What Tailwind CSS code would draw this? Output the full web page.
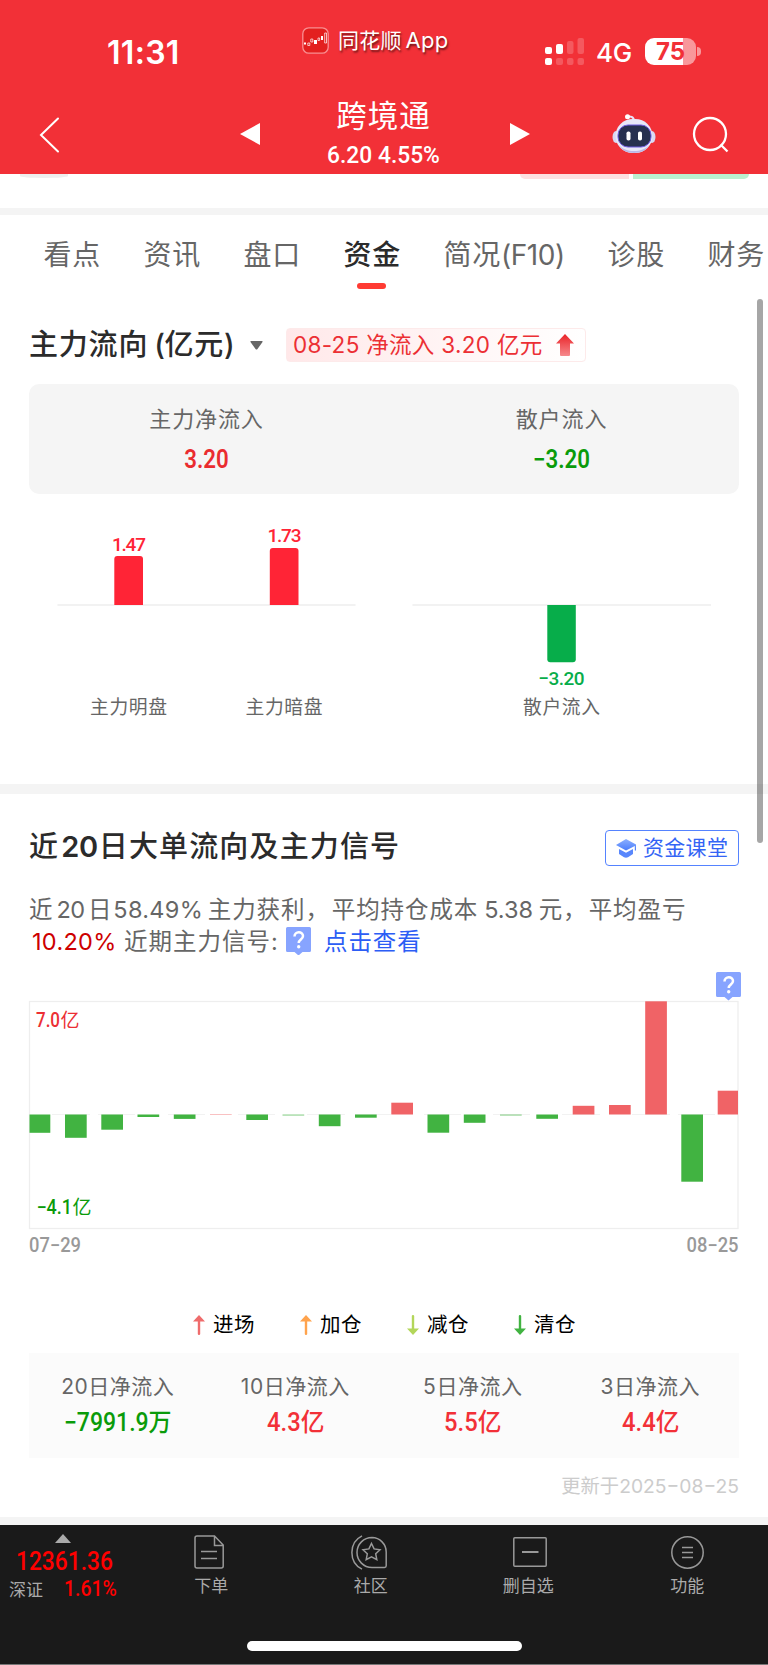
<!DOCTYPE html>
<html lang="zh-CN">
  <head>
    <meta charset="UTF-8" />
    <meta name="viewport" content="width=device-width, initial-scale=1.0" />
    <title>跨境通 - 资金</title>
    <script src="https://cdn.jsdelivr.net/npm/@tailwindcss/browser@4"></script>
  </head>

  <body
    class="relative w-[768px] h-[1665px] overflow-hidden bg-white text-[#666] whitespace-nowrap font-['Inter','Noto_Sans_CJK_SC',sans-serif]"
  >
    <!-- Header -->
    <header class="h-[174px] bg-[#f23037] text-white">
      <!-- Status bar -->
      <div class="flex h-[85px] pt-[26px] pl-[107px]">
        <div class="w-[195px] pt-[7px] text-[32px] leading-[40px] font-semibold tracking-[0.3px]">11:31</div>
        <div class="flex w-[243px] items-start">
          <svg class="mt-[1px] w-[27px] h-[27px]" viewBox="0 0 27 27" fill="none">
            <rect x=".8" y=".8" width="25.4" height="25.4" rx="6" fill="#e3201f" stroke="#f98f92" stroke-width="1.3" />
            <path d="M2 15.500h2v2H2zM12 13h3v4h-3zM19 9h2v4h-2z" fill="#fff" />
            <path d="M5.800 16h2v2.500h-2zM8.800 12h2v3h-2zM16 11h1.600v2.500h-1.600zM22.700 6h1.800v10h-1.800z" stroke="#fff" stroke-width=".7" />
          </svg>
          <div class="ml-[9px] text-[21px] leading-[28px] tracking-[0.2px] [text-shadow:1px_2px_2px_rgba(0,0,0,0.55)]">同花顺<span class="ml-1 text-[22px]">App</span></div>
        </div>
        <svg class="mt-[12px] w-[40px] h-[27px]" viewBox="0 0 40 27" fill="#fff">
          <rect x="0" y="9" width="7" height="7" rx="2" />
          <rect x="11" y="6" width="7" height="10" rx="2" />
          <rect x="22" y="3" width="6.500" height="13" rx="2" opacity=".2" />
          <rect x="32.500" y="0" width="6.500" height="16" rx="2" opacity=".2" />
          <rect x="0" y="20" width="7" height="7" rx="2" />
          <rect x="11" y="20" width="7" height="7" rx="2" opacity=".2" />
          <rect x="22" y="20" width="6.500" height="7" rx="2" opacity=".2" />
          <rect x="32.500" y="20" width="6.500" height="7" rx="2" opacity=".2" />
        </svg>
        <div class="ml-[11px] mt-[8px] w-[49px] text-[26px] leading-[38px] font-medium tracking-[-0.3px]">4G</div>
        <div class="mt-[12px] flex self-start items-center">
          <div
            class="w-[51px] h-[27px] rounded-[9px] bg-linear-to-r from-white from-75% to-white/50 to-75% text-center text-[24px] leading-[27px] font-bold text-[#f23037]"
          >75</div>
          <div class="ml-[1px] w-[4px] h-[9px] rounded-r-full bg-white/50"></div>
        </div>
      </div>

      <!-- Navigation -->
      <div class="flex h-[89px] pl-[39px]">
        <svg class="mt-[32px] w-[21px] h-[36px]" viewBox="0 0 21 36" fill="none" stroke="#fff" stroke-width="2" stroke-linecap="round">
          <path d="M19 1.500 2 18l17 16.500" />
        </svg>
        <svg class="mt-[38px] ml-[180px] w-[20px] h-[22px]" viewBox="0 0 20 22" fill="#fff"><path d="M20 0v22L0 11z" /></svg>
        <div class="w-[250px] text-center">
          <div class="mt-[11px] -ml-[3px] text-[30.5px] leading-[40px] tracking-[1px]">跨境通</div>
          <div class="mt-[3px] -ml-[3px] font-['Roboto'] text-[24.5px] leading-[32px] font-medium scale-x-[0.93]">6.20 4.55%</div>
        </div>
        <svg class="mt-[38px] w-[20px] h-[22px]" viewBox="0 0 20 22" fill="#fff"><path d="M0 0v22l20-11z" /></svg>
        <svg class="mt-[28px] ml-[82px] w-[44px] h-[41px]" viewBox="0 0 44 41" fill="none">
          <path d="M15 4c3-1.500 7 0 7 4" stroke="#e9e6fb" stroke-width="2" />
          <circle cx="15.500" cy="3.800" r="2.500" fill="#fff" />
          <ellipse cx="4" cy="24" rx="3.500" ry="6" fill="#d9d8f3" />
          <ellipse cx="40" cy="24" rx="3.500" ry="6" fill="#d9d8f3" />
          <rect x="3.500" y="6" width="37" height="34" rx="17" fill="#e8e7f8" />
          <path d="M7 32c6 8 24 8 30 0-2 5-8 8-15 8S9 37 7 32z" fill="#bcb8e6" />
          <rect x="6" y="12" width="33" height="22" rx="10" fill="#27304f" stroke="#6f5be0" stroke-width="1" />
          <rect x="14.500" y="18.500" width="4" height="9" rx="1.800" fill="#fff" />
          <rect x="26" y="18.500" width="4" height="9" rx="1.800" fill="#fff" />
        </svg>
        <svg class="mt-[31px] ml-[36px] w-[37px] h-[37px]" viewBox="0 0 37 37" fill="none" stroke="#fff" stroke-width="2.300">
          <circle cx="18" cy="18" r="16" />
          <path d="M28.500 28.500l7 7" />
        </svg>
      </div>
    </header>

    <!-- Bottom edge of the buttons scrolled under the header -->
    <div class="flex h-[34px] items-start">
      <div class="ml-[20px] w-[48px] h-[4px] rounded-b-[50%] bg-[#eee]"></div>
      <div class="ml-[452px] w-[109px] h-[5px] rounded-bl-full rounded-br-sm bg-[#fde0e1]"></div>
      <div class="ml-[4px] w-[116px] h-[5px] rounded-br-full rounded-bl-sm bg-[#baf0cf]"></div>
    </div>
    <div class="h-[7px] bg-[#f4f4f4]"></div>

    <!-- Tabs -->
    <nav class="flex h-[80px] pt-[20px] pl-[43.5px] text-[28px] leading-[40px] tracking-[0.7px]">
      <a href="#" class="w-[100px] shrink-0">看点</a>
      <a href="#" class="w-[100px] shrink-0">资讯</a>
      <a href="#" class="w-[100px] shrink-0">盘口</a>
      <a href="#" class="w-[100px] shrink-0 font-medium text-[#2b2b2b]">
        资金
        <div class="mt-[7.5px] ml-[13.5px] w-[29px] h-[6px] rounded-full bg-[#ff3b33]"></div>
      </a>
      <a href="#" class="w-[164px] shrink-0">简况<span class="tracking-[-0.4px]">(F10)</span></a>
      <a href="#" class="w-[100px] shrink-0">诊股</a>
      <a href="#" class="shrink-0">财务</a>
    </nav>

    <!-- Main fund flow -->
    <section class="h-[489px] px-[29px] pt-[32px]">
      <div class="flex items-center h-[36px]">
        <h2 class="w-[221px] text-[29px] leading-[36px] font-medium tracking-[0.8px] text-[#2b2b2b]">主力流向<span class="ml-[6px] tracking-[-0.5px]">(</span>亿元)</h2>
        <svg class="w-[13px] h-[9px]" viewBox="0 0 13 9" fill="#666"><path d="M1 0h11q1 0 .5 1L7.500 8q-1 1-2 0L.5 1Q0 0 1 0z" /></svg>
        <div
          class="ml-[23px] flex items-center w-[300px] h-[34px] rounded-[4px] border border-[#fdeaea] bg-linear-to-r from-[#ffe8e9] to-white pl-[6px] text-[22.5px] leading-[32px] tracking-[0.3px] text-[#ec2f34]"
        >
          <span class="w-[263px] -mt-px">08-25 净流入 3.20 亿元</span>
          <svg class="w-[18px] h-[22px]" viewBox="0 0 18 22">
            <linearGradient id="up" x1="0" y1="0" x2="0" y2="1">
              <stop offset="0" stop-color="#ea2227" />
              <stop offset="1" stop-color="#f6898c" />
            </linearGradient>
            <path d="M9 0l9 9.500h-4V21q0 1-1 1H5q-1 0-1-1V9.500H0z" fill="url(#up)" />
          </svg>
        </div>
      </div>

      <div class="mt-[21px] grid grid-cols-2 h-[110px] rounded-[10px] bg-[#f5f5f5] text-center">
        <div>
          <div class="mt-[17px] text-[22px] leading-[36px] tracking-[0.9px]">主力净流入</div>
          <div class="mt-[8px] font-['Roboto'] text-[25px] leading-[30px] font-semibold text-[#ea2c2f] scale-x-[0.89]">3.20</div>
        </div>
        <div>
          <div class="mt-[17px] text-[22px] leading-[36px] tracking-[0.9px]">散户流入</div>
          <div class="mt-[8px] font-['Roboto'] text-[25px] leading-[30px] font-semibold text-[#0a9b0a] scale-x-[0.89]">−3.20</div>
        </div>
      </div>

      <svg class="mt-[21px] w-[710px] h-[220px] font-['Roboto','Noto_Sans_CJK_SC']" viewBox="29 515 710 220">
        <path d="M57.500 605H355.500M412.500 605H711" stroke="#f2f2f2" stroke-width="2" />
        <g fill="#ff2436">
          <path d="M114.300 605V559q0-3 3-3h22.700q3 0 3 3v46z" />
          <path d="M269.800 605V551q0-3 3-3h22.700q3 0 3 3v54z" />
        </g>
        <path d="M547.300 605v54.300q0 3 3 3h22.500q3 0 3-3V605z" fill="#07ad4a" />
        <g font-size="19" font-weight="500" text-anchor="middle">
          <text x="129" y="551.300" textLength="34" fill="#ff2436">1.47</text>
          <text x="284.500" y="542.300" textLength="34" fill="#ff2436">1.73</text>
          <text x="561.500" y="685.300" textLength="46" fill="#07ad4a">−3.20</text>
        </g>
        <g font-size="18.800" text-anchor="middle" fill="#666">
          <text x="128.500" y="713.500" textLength="77">主力明盘</text>
          <text x="284" y="713.500" textLength="77">主力暗盘</text>
          <text x="561.500" y="713.500" textLength="77">散户流入</text>
        </g>
      </svg>
    </section>
    <div class="h-[10px] bg-[#f4f4f4]"></div>

    <!-- 20-day large order flow -->
    <section class="h-[723px] px-[29px] pt-[36px]">
      <div class="flex justify-between h-[36px]">
        <h2 class="text-[29px] leading-[33px] font-medium tracking-[1.15px] text-[#2b2b2b]">近<span class="ml-[2px] mr-[1px] font-semibold tracking-[-0.3px]">20</span>日大单流向及主力信号</h2>
        <a href="#" class="flex items-center w-[134px] h-[36px] rounded-[4px] border border-[#5583ff] pl-[10px] text-[#3464f5]">
          <svg class="w-[20px] h-[19px]" viewBox="0 0 20 19">
            <linearGradient id="cap" x1="0" y1="0" x2="0" y2="1">
              <stop offset="0" stop-color="#8db0ff" />
              <stop offset="1" stop-color="#4a7dfb" />
            </linearGradient>
            <path d="M10 0l10 5.500v6h-1.200V7L10 11.500 0 6z" fill="url(#cap)" />
            <path d="M3 10l7 3.700L17 10v5l-5 3.300q-2 .9-4 0L3 15z" fill="#5987fc" />
          </svg>
          <span class="ml-[7px] text-[21px] leading-[34px] tracking-[0.3px]">资金课堂</span>
        </a>
      </div>

      <div class="mt-[28px] text-[23.5px] leading-[32px] tracking-[0.9px]">
        <p class="flex">
          <span>近</span>
          <span class="w-[34.5px] pl-[3px] tracking-[-0.6px]">20</span>
          <span>日</span>
          <span class="w-[95.5px] pl-[1px] tracking-[0.3px]">58.49%</span>
          <span class="w-[124px]">主力获利，</span>
          <span>平均持仓成本</span>
          <span class="w-[60.5px] pl-[6px] tracking-[0px]">5.38</span>
          <span class="w-[50px]">元，</span>
          <span>平均盈亏</span>
        </p>
        <p class="flex pl-[3px]">
          <span class="w-[92px] tracking-[0.3px] text-[#cd0000]">10.20%</span>
          <span class="w-[162px] tracking-[1px]">近期主力信号:</span>
          <svg class="mt-[1px] w-[25px] h-[28px]" viewBox="0 0 25 28">
            <path d="M1.500 0h22Q25 0 25 1.500v22q0 1.500-1.500 1.500h-7L12.500 28.500 8.500 25h-7Q0 25 0 23.500v-22Q0 0 1.500 0z" fill="#87a4ff" />
            <path d="M8.500 9.500c0-5.500 8.500-5.500 8.500-.5 0 3.500-4.300 3.500-4.300 7" fill="none" stroke="#fff" stroke-width="2.500" />
            <circle cx="12.700" cy="19.800" r="1.700" fill="#fff" />
          </svg>
          <a href="#" class="ml-[13px] text-[#2c5df5]">点击查看</a>
        </p>
      </div>

      <div class="mt-[14px] flex justify-end -mr-[2px] h-[29px]">
        <svg class="w-[25px] h-[29px]" viewBox="0 0 25 29">
          <path d="M1.500 0h22Q25 0 25 1.500v22q0 1.500-1.500 1.500h-7L12.500 28.500 8.500 25h-7Q0 25 0 23.500v-22Q0 0 1.500 0z" fill="#87a4ff" />
          <path d="M8.500 9.500c0-5.500 8.500-5.500 8.500-.5 0 3.500-4.300 3.500-4.300 7" fill="none" stroke="#fff" stroke-width="2.500" />
          <circle cx="12.700" cy="19.800" r="1.700" fill="#fff" />
        </svg>
      </div>

      <svg class="w-[710px] h-[262px] overflow-visible font-['Roboto','Noto_Sans_CJK_SC']" viewBox="29 1001 710 262">
        <rect x="29.500" y="1001.500" width="708.500" height="227" fill="none" stroke="#eee" stroke-width="1.300" />
        <path
          d="M52 1114.500h38M98 1114.500h37M168 1114.500h37M238 1114.500h37M307 1114.500h38M355 1114.500h36M424 1114.500h37M493 1114.500h37M562 1114.500h38M632 1114.500h38M678 1114.500h37"
          stroke="#f2f2f2"
        />
        <g fill="#41b341">
          <rect x="29.500" y="1114.500" width="20.800" height="18.300" />
          <rect x="65" y="1114.500" width="21.700" height="23.300" />
          <rect x="101.300" y="1114.500" width="21.700" height="15.200" />
          <rect x="137.500" y="1114.500" width="21.700" height="2.500" />
          <rect x="173.800" y="1114.500" width="21.700" height="4.400" />
          <rect x="246.300" y="1114.500" width="21.700" height="5.500" />
          <rect x="282.500" y="1114.500" width="21.700" height="1.100" opacity=".6" />
          <rect x="318.800" y="1114.500" width="21.700" height="11.700" />
          <rect x="355" y="1114.500" width="21.700" height="3.200" />
          <rect x="427.500" y="1114.500" width="21.700" height="18.200" />
          <rect x="463.800" y="1114.500" width="21.700" height="8.300" />
          <rect x="500" y="1114.500" width="21.700" height="1.100" opacity=".6" />
          <rect x="536.300" y="1114.500" width="21.700" height="4.300" />
          <rect x="681.300" y="1114.500" width="21.700" height="67.200" />
        </g>
        <g fill="#f06366">
          <rect x="210" y="1114" width="21.700" height="1" opacity=".4" />
          <rect x="391.300" y="1102.700" width="21.700" height="11.800" />
          <rect x="572.700" y="1105.800" width="21.700" height="8.700" />
          <rect x="609" y="1105" width="21.700" height="9.500" />
          <rect x="645.200" y="1001.300" width="21.700" height="113.200" />
          <rect x="717.700" y="1090.700" width="20.300" height="23.800" />
        </g>
        <g font-size="19.500" font-weight="500">
          <text x="36" y="1026.800" textLength="24" lengthAdjust="spacingAndGlyphs" fill="#ec2f34">7.0</text>
          <text x="60.500" y="1027" font-size="19" font-weight="400" fill="#ec2f34">亿</text>
          <text x="36.500" y="1214" textLength="35.500" lengthAdjust="spacingAndGlyphs" fill="#0a9b0a">−4.1</text>
          <text x="72.500" y="1214.300" font-size="19" font-weight="400" fill="#0a9b0a">亿</text>
        </g>
        <g font-size="19.500" font-weight="500" fill="#999">
          <text x="29" y="1251.500" textLength="52" lengthAdjust="spacingAndGlyphs">07−29</text>
          <text x="686.500" y="1251.500" textLength="52" lengthAdjust="spacingAndGlyphs">08−25</text>
        </g>
      </svg>

      <!-- Legend -->
      <div class="mt-[43px] ml-[164px] flex h-[38px] items-center text-[20.5px] leading-[36px] tracking-[0.5px] text-black">
        <div class="flex w-[107px] items-center">
          <svg class="w-[12px] h-[20px] mr-[8px]" viewBox="0 0 12 20" fill="#ef6c6c"><path d="M6 0l6 6.500H7.200V19q0 1-1.200 1t-1.200-1V6.500H0z" /></svg>进场
        </div>
        <div class="flex w-[107px] items-center">
          <svg class="w-[12px] h-[20px] mr-[8px]" viewBox="0 0 12 20" fill="#ffa34d"><path d="M6 0l6 6.500H7.200V19q0 1-1.200 1t-1.200-1V6.500H0z" /></svg>加仓
        </div>
        <div class="flex w-[107px] items-center">
          <svg class="w-[12px] h-[20px] mr-[8px]" viewBox="0 0 12 20" fill="#b3d65a"><path d="M6 20l6-6.500H7.200V1Q7.200 0 6 0T4.800 1v12.500H0z" /></svg>减仓
        </div>
        <div class="flex items-center">
          <svg class="w-[12px] h-[20px] mr-[8px]" viewBox="0 0 12 20" fill="#41b341"><path d="M6 20l6-6.500H7.200V1Q7.200 0 6 0T4.800 1v12.500H0z" /></svg>清仓
        </div>
      </div>

      <!-- Net inflow by period -->
      <div class="mt-[9px] grid grid-cols-4 h-[105px] bg-[#fbfbfb] pt-[18px] text-center text-[21px] leading-[34px] tracking-[0.5px]">
        <div>
          <div class="-mt-px mb-[2px]">20日净流入</div>
          <div class="font-['Roboto','Noto_Sans_CJK_SC'] text-[25px] font-medium tracking-normal text-[#0a9b0a] scale-x-[0.92]">−7991.9万</div>
        </div>
        <div>
          <div class="-mt-px mb-[2px]">10日净流入</div>
          <div class="font-['Roboto','Noto_Sans_CJK_SC'] text-[25px] font-medium tracking-normal text-[#f23037] scale-x-[0.95]">4.3亿</div>
        </div>
        <div>
          <div class="-mt-px mb-[2px]">5日净流入</div>
          <div class="font-['Roboto','Noto_Sans_CJK_SC'] text-[25px] font-medium tracking-normal text-[#f23037] scale-x-[0.95]">5.5亿</div>
        </div>
        <div>
          <div class="-mt-px mb-[2px]">3日净流入</div>
          <div class="font-['Roboto','Noto_Sans_CJK_SC'] text-[25px] font-medium tracking-normal text-[#f23037] scale-x-[0.95]">4.4亿</div>
        </div>
      </div>
      <div class="mt-[11px] text-right text-[19.3px] leading-[34px] text-[#ccc]">更新于2025−08−25</div>
    </section>
    <div class="h-[8px] bg-[#f4f4f4]"></div>

    <!-- Bottom bar -->
    <footer class="h-[140px] bg-[#1a1a1a] border-b border-[#777] text-[#aaa] text-[17px]">
      <div class="flex h-[116px]">
        <div class="w-[130px] pt-[9px]">
          <svg class="ml-[55px] w-[16px] h-[9px]" viewBox="0 0 16 9" fill="#aaa"><path d="M8 0l8 9H0z" /></svg>
          <div class="mt-[4px] ml-[16px] origin-left scale-x-[0.91] font-['Roboto'] text-[25px] leading-[30px] font-medium text-[#f00]">12361.36</div>
          <div class="flex ml-[9px] h-[26px] leading-[24px]">
            <span class="w-[55px] leading-[26px]">深证</span>
            <span class="origin-left scale-x-[0.88] font-['Roboto'] text-[22px] font-medium text-[#f00]">1.61%</span>
          </div>
        </div>
        <div class="grid grid-cols-4 flex-1 text-center leading-[24px]">
          <a href="#" class="pt-[10px]">
            <svg class="ml-[64px] w-[30px] h-[34px]" viewBox="0 0 30 34" fill="none" stroke="#999" stroke-width="1.500">
              <path d="M1 3q0-2 2-2h17.500l8.700 9v21q0 2-2 2H3q-2 0-2-2zM20.500 1v9.500h8.700M7 16.500h16M7 23.500h16" />
            </svg>
            <div class="mt-[5px] ml-[3px]">下单</div>
          </a>
          <a href="#" class="pt-[10px]">
            <svg class="mx-auto w-[36px] h-[35px]" viewBox="0 0 36 35" fill="none" stroke="#999" stroke-width="1.500">
              <path d="M11 .8C-2.500 7.500-2.500 27.500 11 34.200" />
              <path d="M21 2.500a15 15 0 0 0 0 30h12.500q1.700 0 1.700-1.700V17A14.500 14.500 0 0 0 21 2.500z" />
              <path d="M20.500 8.500l2.600 5.400 5.900.8-4.300 4.100 1.100 5.900-5.300-2.900-5.300 2.900 1.100-5.900-4.300-4.100 5.900-.8z" />
            </svg>
            <div class="mt-[4px] ml-[3px]">社区</div>
          </a>
          <a href="#" class="pt-[12px]">
            <svg class="ml-[64px] w-[34px] h-[30px]" viewBox="0 0 34 30" fill="none" stroke="#999" stroke-width="1.500">
              <rect x=".8" y=".8" width="32.400" height="28.400" rx="1" />
              <path d="M9 15h16.500" stroke-width="2" />
            </svg>
            <div class="mt-[7px] -ml-px">删自选</div>
          </a>
          <a href="#" class="pt-[11px]">
            <svg class="ml-[62px] w-[33px] h-[33px]" viewBox="0 0 33 33" fill="none" stroke="#999" stroke-width="1.500">
              <circle cx="16.500" cy="16.500" r="15.700" />
              <path d="M11 11.500h11M11 16.500h11M11 21.500h11" stroke-width="1.700" />
            </svg>
            <div class="mt-[5px] -ml-[2px]">功能</div>
          </a>
        </div>
      </div>
      <div class="mx-auto w-[275px] h-[10px] rounded-full bg-white"></div>
    </footer>

    <!-- Scroll indicator -->
    <div class="absolute right-[5px] top-[299px] w-[6px] h-[544px] rounded-full bg-black/35"></div>
  </body>
</html>
